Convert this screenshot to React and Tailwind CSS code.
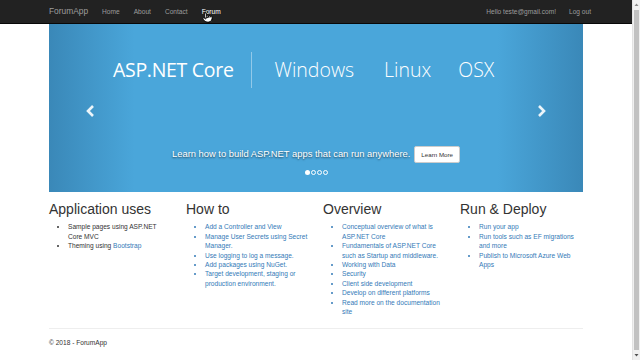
import { Pointer } from 'lucide-react';

const columns = [
  {
    title: 'Application uses',
    items: [
      { text: 'Sample pages using ASP.NET Core MVC' },
      { text: 'Theming using ', link: 'Bootstrap' },
    ],
  },
  {
    title: 'How to',
    links: true,
    items: [
      { text: 'Add a Controller and View' },
      { text: 'Manage User Secrets using Secret Manager.' },
      { text: 'Use logging to log a message.' },
      { text: 'Add packages using NuGet.' },
      { text: 'Target development, staging or production environment.' },
    ],
  },
  {
    title: 'Overview',
    links: true,
    items: [
      { text: 'Conceptual overview of what is ASP.NET Core' },
      { text: 'Fundamentals of ASP.NET Core such as Startup and middleware.' },
      { text: 'Working with Data' },
      { text: 'Security' },
      { text: 'Client side development' },
      { text: 'Develop on different platforms' },
      { text: 'Read more on the documentation site' },
    ],
  },
  {
    title: 'Run & Deploy',
    links: true,
    items: [
      { text: 'Run your app' },
      { text: 'Run tools such as EF migrations and more' },
      { text: 'Publish to Microsoft Azure Web Apps' },
    ],
  },
];

function Navbar() {
  return (
    <nav className="h-[24px] bg-[#222222] border-b border-[#080808] shrink-0">
      <div className="relative w-[534px] mx-auto h-full flex items-center text-[6.6px] text-[#9d9d9d]">
        <span className="text-[8.4px] mr-[14px]">ForumApp</span>
        <div className="flex gap-[14px]">
          <span>Home</span>
          <span>About</span>
          <span>Contact</span>
          <span className="text-white">Forum</span>
        </div>
        <div className="ml-auto mr-[-8px] flex gap-[13px]">
          <span>Hello teste@gmail.com!</span>
          <span>Log out</span>
        </div>
        {/* mouse cursor */}
        <Pointer
          className="absolute left-[153px] top-[12px] w-[11px] h-[11px] text-black"
          fill="white"
          strokeWidth={2}
        />
      </div>
    </nav>
  );
}

function Carousel() {
  return (
    <div className="relative w-[534px] h-[168px] mx-auto shrink-0 bg-[linear-gradient(to_right,#3a88b8_0%,#4aa6da_16%,#4aa6da_84%,#3a88b8_100%)] text-white">
      {/* headline */}
      <div className="flex items-center pt-[28px] pl-[64px] font-['Open_Sans','Noto_Sans',sans-serif]">
        <span className="text-[19.5px] leading-none tracking-[-0.3px]">ASP.NET Core</span>
        <span className="w-px h-[36px] bg-white/40 ml-[17px] mr-[23px]" />
        <span className="text-[19.5px] font-light leading-none">Windows</span>
        <span className="text-[19.5px] font-light leading-none ml-[30px]">Linux</span>
        <span className="text-[19.5px] font-light leading-none ml-[27px]">OSX</span>
      </div>

      {/* controls */}
      <span className="absolute left-[37px] top-[81px] text-white/90">
        <svg width="9" height="12" viewBox="0 0 9 12"><path d="M7 1 L2 6 L7 11" fill="none" stroke="currentColor" strokeWidth="2.6" /></svg>
      </span>
      <span className="absolute right-[37px] top-[81px] text-white/90">
        <svg width="9" height="12" viewBox="0 0 9 12"><path d="M2 1 L7 6 L2 11" fill="none" stroke="currentColor" strokeWidth="2.6" /></svg>
      </span>

      {/* caption */}
      <div className="absolute left-0 right-0 top-[122px] flex flex-col items-center">
        <div className="flex items-center gap-[4px]">
          <span className="text-[9.4px] [text-shadow:0_1px_2px_rgba(0,0,0,0.6)]">
            Learn how to build ASP.NET apps that can run anywhere.
          </span>
          <span className="bg-white text-[#333] border border-[#ccc] rounded-[2px] text-[6.2px] px-[6px] h-[17px] flex items-center">
            Learn More
          </span>
        </div>
        <div className="flex items-center gap-[1.5px] mt-[7px]">
          <span className="w-[5px] h-[5px] rounded-full bg-white" />
          <span className="w-[4.5px] h-[4.5px] rounded-full border border-white" />
          <span className="w-[4.5px] h-[4.5px] rounded-full border border-white" />
          <span className="w-[4.5px] h-[4.5px] rounded-full border border-white" />
        </div>
      </div>
    </div>
  );
}

function Columns() {
  return (
    <div className="w-[534px] mx-auto grid grid-cols-4 gap-[14px] mt-[10px] text-[6.6px] leading-[9.4px] text-[#333]">
      {columns.map((col) => (
        <div key={col.title}>
          <h2 className="text-[14px] leading-[15.4px] text-[#333] mb-[5px]">{col.title}</h2>
          <ul className="list-disc pl-[19px]">
            {col.items.map((item) => (
              <li key={item.text} className={col.links ? 'text-[#337ab7]' : ''}>
                {item.text}
                {item.link && <span className="text-[#337ab7]">{item.link}</span>}
              </li>
            ))}
          </ul>
        </div>
      ))}
    </div>
  );
}

function Scrollbar() {
  return (
    <div className="w-[8px] h-full bg-[#f0f0f0] border-l border-[#e3e3e3] flex flex-col items-center">
      <svg width="5" height="6" viewBox="0 0 5 6" className="mt-[2px]"><path d="M0.5 4 L2.5 1.5 L4.5 4 Z" fill="#8a8a8a" /></svg>
      <div className="w-[5px] flex-1 bg-[#c1c1c1] my-[2px]" />
      <svg width="5" height="6" viewBox="0 0 5 6" className="mb-[2px]"><path d="M0.5 2 L2.5 4.5 L4.5 2 Z" fill="#505050" /></svg>
    </div>
  );
}

export default function App() {
  return (
    <div className="w-[640px] h-[360px] overflow-hidden flex bg-white font-['Liberation_Sans',Arial,sans-serif]">
      <div className="w-[632px] h-full flex flex-col">
        <Navbar />
        <Carousel />
        <Columns />
        <div className="w-[534px] mx-auto mt-auto mb-[12px]">
          <hr className="border-t border-[#eee]" />
          <p className="text-[6.6px] text-[#333] mt-[9px]">© 2018 - ForumApp</p>
        </div>
      </div>
      <Scrollbar />
    </div>
  );
}
